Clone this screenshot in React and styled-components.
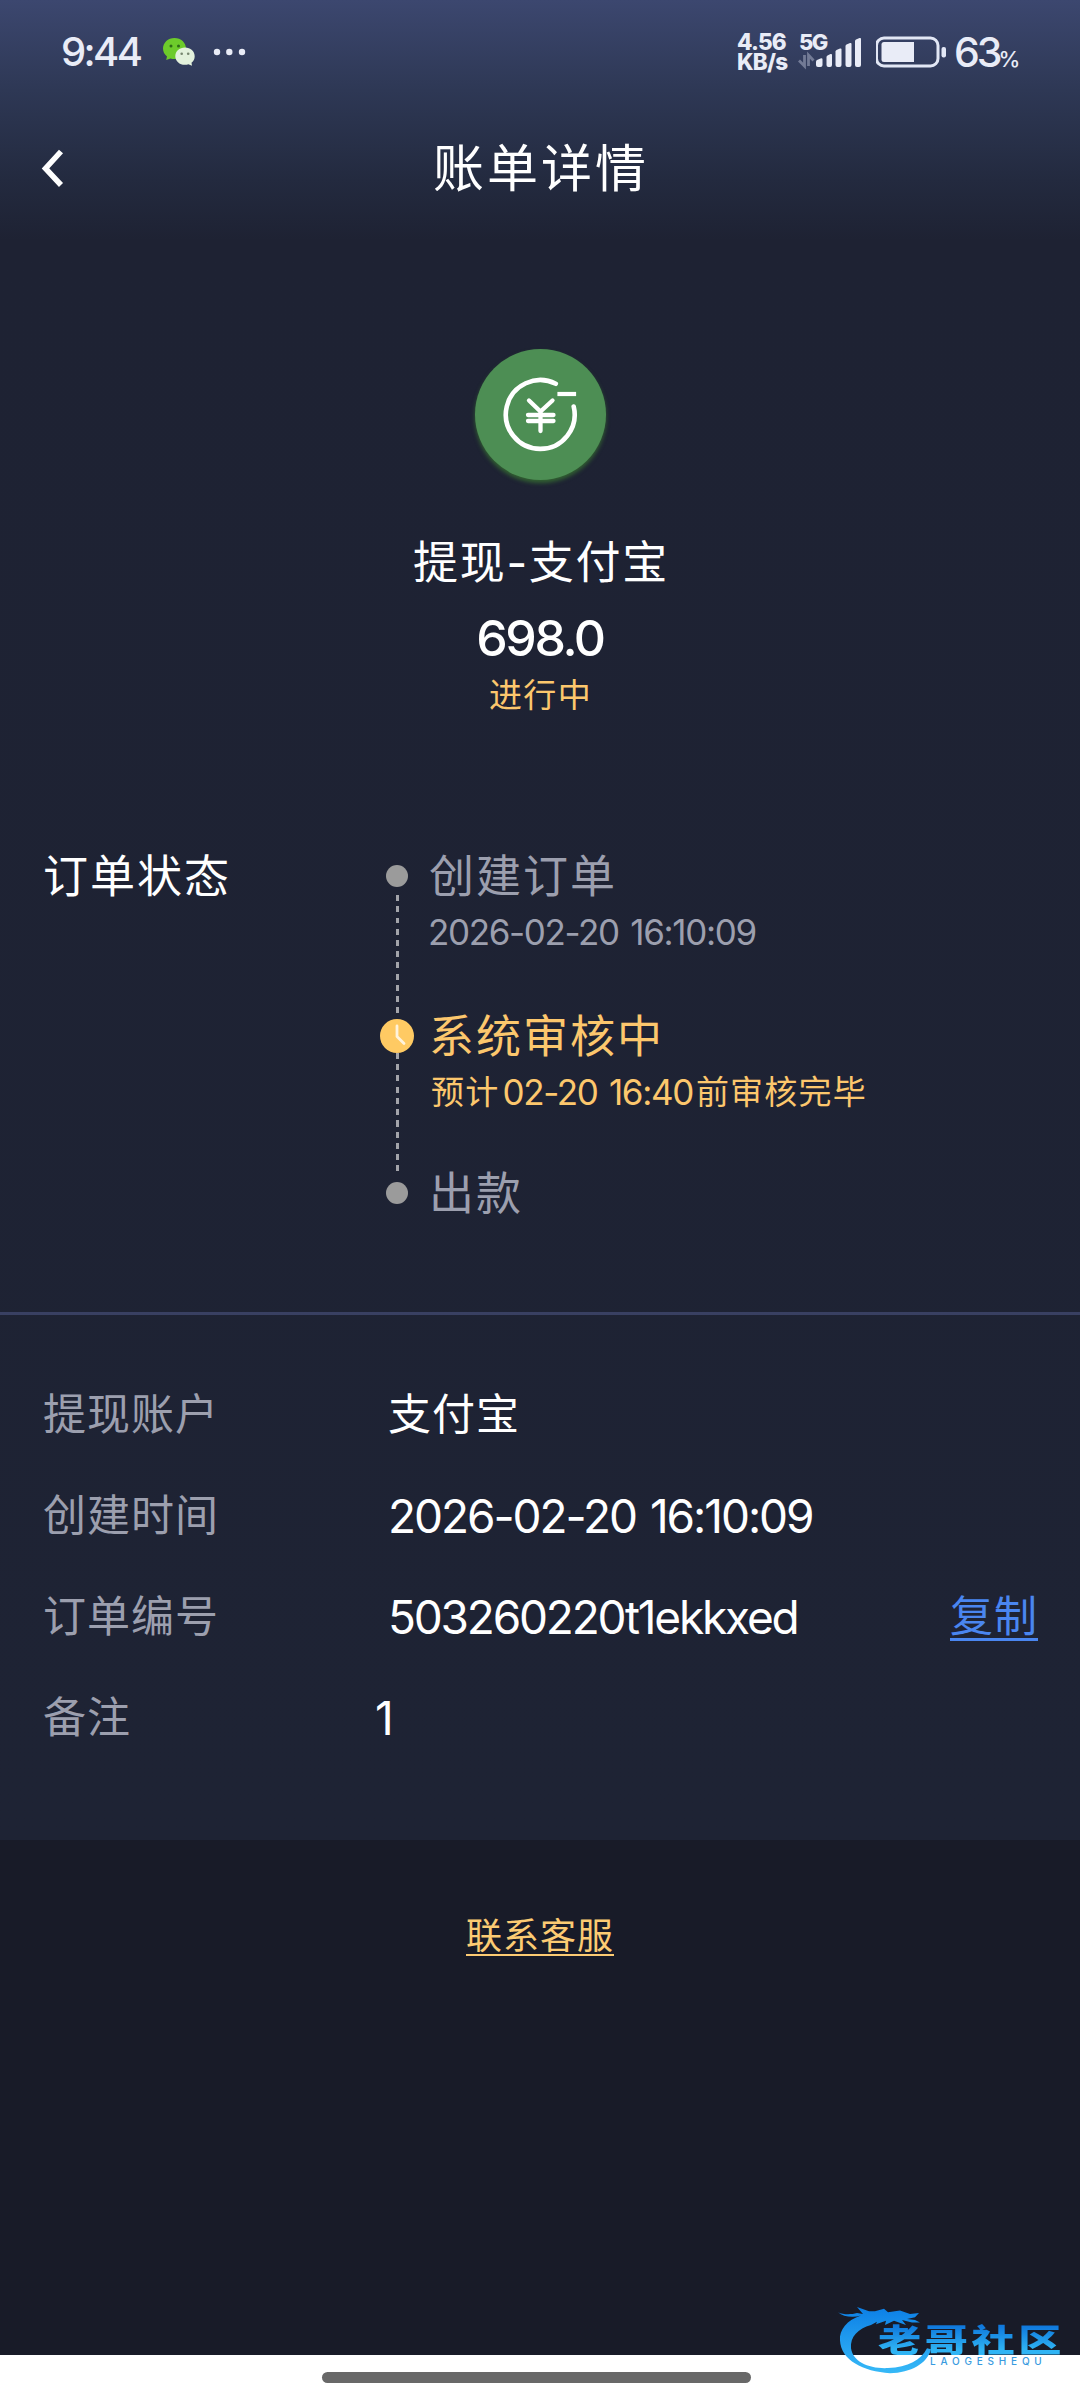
import React from "react";
import styled, { createGlobalStyle } from "styled-components";

const GlobalStyle = createGlobalStyle`
  * { box-sizing: border-box; }
  body {
    margin: 0;
    background: #181b28;
    font-family: Inter, "Noto Sans CJK SC", sans-serif;
    font-weight: 400;
    color: #fff;
  }
`;

const Page = styled.div`
  width: 1080px;
  height: 2400px;
  display: flex;
  flex-direction: column;
  overflow: hidden;
  background: #181b28;
`;

const Panel = styled.main`
  height: 1840px;
  flex: none;
  background: linear-gradient(180deg, #3c476f 0, #2e3855 90px, #232a3f 180px, #1e2233 240px, #1e2334 100%);
`;

const StatusBar = styled.header`
  height: 104px;
  padding: 0 62px 0 61px;
  display: flex;
  align-items: center;
  justify-content: space-between;
  color: #e9ecf7;
`;

const StatusGroup = styled.div`
  display: flex;
  align-items: center;
  height: 40px;
`;

const Clock = styled.span`
  font-size: 40px;
  font-weight: 500;
  line-height: 40px;
  letter-spacing: -2.6px;
  width: 102px;
`;

const Speed = styled.div`
  width: 61px;
  font-size: 22.500px;
  font-weight: 800;
  line-height: 20px;
  letter-spacing: -0.8px;
`;

const Percent = styled.div`
  display: flex;
  align-items: baseline;
  height: 40px;
  font-size: 41px;
  font-weight: 450;
  line-height: 40px;
  letter-spacing: -3px;
  margin-left: 7px;
  width: 64px;
  white-space: nowrap;
`;

const PercentSign = styled.span`
  font-size: 22px;
  line-height: 22px;
  letter-spacing: 0;
  margin-left: -1px;
`;

const NavBar = styled.nav`
  height: 128px;
  display: grid;
  grid-template-columns: 100px 1fr 100px;
  align-items: center;
`;

const BackButton = styled.button`
  height: 60px;
  padding: 0 0 0 40px;
  border: 0;
  background: none;
  display: flex;
  align-items: center;
`;

const Title = styled.h1`
  margin: 2px 0 0 2px;
  text-align: center;
  font-size: 51px;
  font-weight: 400;
  line-height: 70px;
  letter-spacing: 3px;
`;

const Summary = styled.section`
  height: 608px;
  padding-top: 117px;
  display: flex;
  flex-direction: column;
  align-items: center;
`;

const Badge = styled.div`
  width: 131px;
  height: 131px;
  border-radius: 50%;
  background: #4d8e54;
  box-shadow: 0 3px 4px rgba(58, 125, 48, 0.7);
`;

const MethodName = styled.div`
  margin-top: 53px;
  padding-left: 2px;
  font-size: 45px;
  line-height: 60px;
  letter-spacing: 1.7px;
`;

const Amount = styled.div`
  margin-top: 15px;
  font-size: 50px;
  font-weight: 450;
  line-height: 60px;
  letter-spacing: -2.4px;
`;

const State = styled.div`
  margin-top: 7px;
  padding-left: 1px;
  font-size: 33px;
  line-height: 40px;
  letter-spacing: 1.3px;
  color: #fcc76d;
`;

const Progress = styled.section`
  height: 472px;
  padding: 14px 44px 0 43px;
  display: grid;
  grid-template-columns: 337px 1fr;
  align-items: start;
`;

const ProgressLabel = styled.h2`
  margin: 1px 0 0;
  font-size: 45px;
  font-weight: 400;
  line-height: 44px;
  letter-spacing: 2px;
`;

const Steps = styled.ol`
  list-style: none;
  margin: 0;
  padding: 11px 0 0;
`;

const Step = styled.li`
  display: flex;
  height: ${(p) => p.$height}px;
`;

const Rail = styled.div`
  width: 34px;
  display: flex;
  flex-direction: column;
  align-items: center;
`;

const Dot = styled.span`
  width: 22px;
  height: 22px;
  flex: none;
  border-radius: 50%;
  background: #9b9b9b;
`;

const Dashes = styled.span`
  width: 3px;
  flex: 1;
  margin: ${(p) => p.$margin};
  background: repeating-linear-gradient(180deg, #a3a4aa 0 6px, transparent 6px 11.25px);
`;

const StepBody = styled.div`
  margin: ${(p) => (p.$active ? "-4px" : "-10px")} 0 0 15px;
  color: ${(p) => (p.$active ? "#fcc76d" : "#9c9fae")};
`;

const StepTitle = styled.div`
  font-size: 45px;
  line-height: 44px;
  letter-spacing: 2px;
  white-space: nowrap;
`;

const StepNote = styled.div`
  margin: ${(p) => (p.$indent ? "13px 0 0 2px" : "13px 0 0 -1px")};
  display: flex;
  gap: 3px;
  font-size: 33px;
  line-height: 40px;
  letter-spacing: 1.2px;
  white-space: nowrap;
`;

const StepTime = styled.time`
  font-size: 35px;
  letter-spacing: -1.35px;
  word-spacing: 3px;
`;

const Details = styled.dl`
  margin: 0;
  padding: 48px 42px 0 43px;
  border-top: 3px solid #394062;
`;

const DetailRow = styled.div`
  height: 101px;
  display: flex;
  align-items: center;
`;

const DetailLabel = styled.dt`
  width: ${(p) => (p.$short ? 332 : 345)}px;
  font-size: 43px;
  line-height: 44px;
  letter-spacing: 1px;
  color: #9c9fae;
`;

const DetailValue = styled.dd`
  margin: ${(p) => (p.$latin ? "3px 0 0" : "0")};
  flex: 1;
  font-size: ${(p) => (p.$latin ? 46 : 43)}px;
  line-height: 44px;
  letter-spacing: ${(p) => p.$spacing}px;
  word-spacing: 3px;
`;

const Link = styled.a`
  align-self: center;
  padding-top: ${(p) => p.$shift}px;
  font-size: ${(p) => p.$size}px;
  line-height: ${(p) => p.$line}px;
  letter-spacing: 1px;
  color: ${(p) => p.$color};
  border-bottom: ${(p) => p.$rule}px solid;
`;

const Support = styled.section`
  height: 515px;
  flex: none;
  padding-top: 75px;
  display: flex;
  flex-direction: column;
  align-items: center;
`;

const HomeBar = styled.footer`
  position: relative;
  height: 45px;
  flex: none;
  display: flex;
  padding: 17px 0 0 322px;
  background: #fff;
`;

const HomeIndicator = styled.div`
  width: 429px;
  height: 11px;
  border-radius: 6px;
  background: #686868;
`;

const Watermark = styled.div`
  position: absolute;
  left: 836px;
  top: -62px;
  width: 230px;
  height: 84px;
`;

const Dragon = styled.svg`
  position: absolute;
  inset: 0;
`;

const WatermarkName = styled.div`
  position: absolute;
  left: 42px;
  top: 28px;
  font-family: "Noto Sans CJK SC", sans-serif;
  font-size: 32px;
  font-weight: 900;
  line-height: 34px;
  letter-spacing: 2.6px;
  white-space: nowrap;
  transform: scaleX(1.35);
  transform-origin: 0 0;
  color: transparent;
  background: linear-gradient(180deg, #0f78dc 15%, #2fb4f4 85%);
  background-clip: text;
`;

const WatermarkLatin = styled.div`
  position: absolute;
  left: 94px;
  top: 62px;
  font-size: 10px;
  font-weight: 500;
  line-height: 12px;
  letter-spacing: 4.8px;
  color: #3a9be0;
`;

const WeChat = () => (
  <svg width="32" height="28" viewBox="0 0 32 28">
    <path d="M11.5 0C5 0 0 4.700 0 10.500c0 3.300 1.500 6 4 8L3.200 22l4.300-1.600c1.300.4 2.600.6 4 .6C18 21 23 16.300 23 10.500S18 0 11.500 0z" fill="#6dcb2b" />
    <path d="M22 9.500c5.600 0 9.700 3.900 9.700 8.700 0 2.700-1.200 4.900-3.200 6.500l.5 3-3.600-1.500c-1.100.4-2.200.6-3.400.6-5.600 0-9.700-3.800-9.700-8.600S16.400 9.500 22 9.500z" fill="#e3f1dc" />
    <g fill="#2d6b17">
      <circle cx="8" cy="8" r="1.500" />
      <circle cx="15.500" cy="8" r="1.500" />
    </g>
    <g fill="#77866f">
      <circle cx="18.700" cy="15.700" r="1.300" />
      <circle cx="25.200" cy="15.700" r="1.300" />
    </g>
  </svg>
);

const MoreSvg = styled.svg`
  margin: 0 0 0 18px;
`;

const MoreDots = () => (
  <MoreSvg width="34" height="8" viewBox="0 0 34 8" fill="#e9ecf7">
    <circle cx="4" cy="4" r="3.200" />
    <circle cx="16.300" cy="4" r="3.200" />
    <circle cx="29" cy="4" r="3.200" />
  </MoreSvg>
);

const SignalBox = styled.div`
  width: 66px;
  height: 40px;
  position: relative;
  margin-right: 12px;
`;

const NetworkType = styled.span`
  position: absolute;
  left: 1px;
  top: 0;
  font-size: 22px;
  font-weight: 800;
  line-height: 20px;
  letter-spacing: -1.6px;
`;

const Signal = () => (
  <SignalBox>
    <NetworkType>5G</NetworkType>
    <svg width="66" height="40" viewBox="0 0 66 40">
      <path d="M6.500 23v11L1 28.500M10.500 34V23l5 5.500" fill="none" stroke="#737b96" strokeWidth="2.800" />
      <g fill="#e9ecf7">
        <path d="M18 29.500q0-1 1-1.500l3.500-1.500q2-.7 2 1V33q0 2-2 2H20q-2 0-2-2z" />
        <path d="M28.500 25q0-1 1-1.500l3-1.500q1.500-.5 1.500 1v10q0 2-2 2h-1.500q-2 0-2-2z" />
        <path d="M37.500 19.500q0-1 1-1.500l3.500-1.500q1.500-.5 1.500 1V33q0 2-2 2h-2q-2 0-2-2z" />
        <path d="M47.500 14q0-1 1-1.500l3.500-1.500q1.500-.5 1.500 1v21q0 2-2 2h-2q-2 0-2-2z" />
        <path d="M57 9q0-1 1-1.500L61.500 6q1.500-.5 1.500 1v26q0 2-2 2h-2q-2 0-2-2z" />
      </g>
    </svg>
  </SignalBox>
);

const Battery = () => (
  <svg width="71" height="32" viewBox="0 0 71 32">
    <rect x="0.500" y="2" width="61.500" height="28" rx="7.500" fill="none" stroke="#e2e7f5" strokeWidth="3" />
    <path d="M8 6h30v20H8q-2.500 0-2.500-2.500v-15Q5.500 6 8 6z" fill="#e9ecf7" />
    <rect x="65.500" y="11" width="4.500" height="10.500" rx="2" fill="#e2e7f5" />
  </svg>
);

const BackIcon = () => (
  <svg width="25" height="40" viewBox="0 0 25 40">
    <path d="M21 3.500L5.500 20.500 21 37" fill="none" stroke="#fff" strokeWidth="5.500" strokeLinejoin="miter" />
  </svg>
);

const YuanIcon = () => (
  <svg width="131" height="131" viewBox="0 0 131 131" fill="none" stroke="#fff" strokeLinecap="round">
    <path d="M80.800 34.800A34.400 34.400 0 1 0 98.700 57.500" strokeWidth="4.600" />
    <path d="M84.500 45H99" strokeWidth="4.200" strokeLinecap="square" />
    <path d="M54 51.500L65.500 62.500 77.500 51.500M65.500 62.500V82M53 66H78.500M53 72H78.500" strokeWidth="4.300" />
  </svg>
);

const ClockIcon = () => (
  <svg width="34" height="34" viewBox="0 0 34 34">
    <circle cx="17" cy="17" r="17" fill="#ffca63" />
    <path d="M17 7v10.500l7 7" fill="none" stroke="#fff3dc" strokeWidth="2.800" strokeLinecap="round" strokeLinejoin="round" />
  </svg>
);

const DragonMark = () => (
  <Dragon width="230" height="84" viewBox="0 0 230 84">
    <defs>
      <linearGradient id="dragon" x1="0" y1="0" x2="0" y2="1">
        <stop offset="0" stopColor="#0c7fe6" />
        <stop offset="1" stopColor="#36b9f7" />
      </linearGradient>
    </defs>
    <path
      transform="translate(0 8) scale(1 .86)"
      fill="url(#dragon)"
      d="M2 13c5 3 13 3 19 1l6 1-6-8 12 5 6 0 9-3 4 4 12-2 10 4 9-1-4 5-8 2 8 1 5 3-8 0-10-3 4 6-12-5-9 5 1-5-10 4 1-3-6 4c-13 4-21 14-20 27 2 16 18 24 37 23 20-1 33-9 39-23l4 1c-4 17-20 27-41 28C27 82 5 69 4 46 3 34 11 22 25 17 16 20 7 18 2 13z"
    />
  </Dragon>
);

const Row = ({ label, value, latin, spacing = 1, short, action }) => (
  <DetailRow>
    <DetailLabel $short={short}>{label}</DetailLabel>
    <DetailValue $latin={latin} $spacing={spacing}>{value}</DetailValue>
    {action}
  </DetailRow>
);

export default function App() {
  return (
    <Page>
      <GlobalStyle />
      <Panel>
        <StatusBar>
          <StatusGroup>
            <Clock>9:44</Clock>
            <WeChat />
            <MoreDots />
          </StatusGroup>
          <StatusGroup>
            <Speed>
              <div>4.56</div>
              <div>KB/s</div>
            </Speed>
            <Signal />
            <Battery />
            <Percent>63<PercentSign>%</PercentSign></Percent>
          </StatusGroup>
        </StatusBar>
        <NavBar>
          <BackButton aria-label="返回"><BackIcon /></BackButton>
          <Title>账单详情</Title>
        </NavBar>
        <Summary>
          <Badge><YuanIcon /></Badge>
          <MethodName>提现-支付宝</MethodName>
          <Amount>698.0</Amount>
          <State>进行中</State>
        </Summary>
        <Progress>
          <ProgressLabel>订单状态</ProgressLabel>
          <Steps>
            <Step $height={154}>
              <Rail><Dot /><Dashes $margin="8px 0 0" /></Rail>
              <StepBody>
                <StepTitle>创建订单</StepTitle>
                <StepNote><StepTime>2026-02-20 16:10:09</StepTime></StepNote>
              </StepBody>
            </Step>
            <Step $height={163}>
              <Rail><ClockIcon /><Dashes $margin="0 0 9px" /></Rail>
              <StepBody $active>
                <StepTitle>系统审核中</StepTitle>
                <StepNote $indent>
                  <span>预计</span><StepTime>02-20 16:40</StepTime><span>前审核完毕</span>
                </StepNote>
              </StepBody>
            </Step>
            <Step $height={22}>
              <Rail><Dot /></Rail>
              <StepBody><StepTitle>出款</StepTitle></StepBody>
            </Step>
          </Steps>
        </Progress>
        <Details>
          <Row label="提现账户" value="支付宝" />
          <Row label="创建时间" value="2026-02-20 16:10:09" latin spacing={-2.05} />
          <Row
            label="订单编号"
            value="503260220t1ekkxed"
            latin
            spacing={-2.2}
            action={<Link $size={43} $line={43} $shift={4} $rule={3} $color="#4a86f0">复制</Link>}
          />
          <Row label="备注" value="1" latin short />
        </Details>
      </Panel>
      <Support>
        <Link $size={36} $line={36} $shift={3} $rule={2} $color="#fccb73">联系客服</Link>
      </Support>
      <HomeBar>
        <HomeIndicator />
        <Watermark>
          <DragonMark />
          <WatermarkName>老哥社区</WatermarkName>
          <WatermarkLatin>LAOGESHEQU</WatermarkLatin>
        </Watermark>
      </HomeBar>
    </Page>
  );
}
